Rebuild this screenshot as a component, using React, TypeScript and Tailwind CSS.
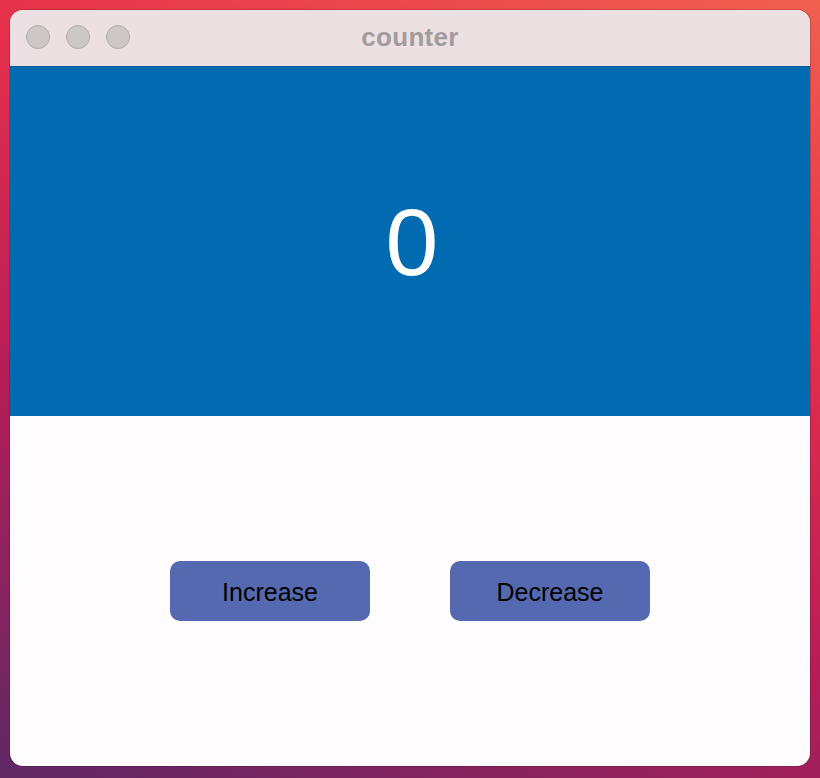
import React, { useState } from "react";

export default function App() {
  const [count, setCount] = useState(0);
  return (
    <div
      className="w-[820px] h-[778px] p-[10px] pb-[12px] overflow-hidden"
      style={{
        background:
          "linear-gradient(200deg, #f0604f 0%, #e6304c 30%, #b81d57 62%, #5e2964 100%)",
      }}
    >
      <div className="w-[800px] h-[756px] rounded-[13px] overflow-hidden flex flex-col bg-[#fefcfd] shadow-[0_0_0_1px_rgba(0,0,0,0.15)]">
        <div className="h-[56px] shrink-0 bg-[#ece0e3] relative flex items-center justify-center">
          <div className="absolute left-[16px] top-[15px] flex gap-[16px]">
            <div className="w-[24px] h-[24px] rounded-full bg-[#cdc7c8] border border-[#b3abad]" />
            <div className="w-[24px] h-[24px] rounded-full bg-[#cdc7c8] border border-[#b3abad]" />
            <div className="w-[24px] h-[24px] rounded-full bg-[#cdc7c8] border border-[#b3abad]" />
          </div>
          <span className="text-[26px] font-bold text-[#a39b9e] font-['Liberation_Sans',sans-serif] leading-none -mt-[2px] tracking-[0.3px]">
            counter
          </span>
        </div>
        <div className="h-[350px] shrink-0 bg-[#006bb0] border-t border-[#0a5a94] flex items-center justify-center">
          <span className="text-[95px] text-white font-['Liberation_Sans',sans-serif] leading-none pl-[4px] pt-[2px]">
            {count}
          </span>
        </div>
        <div className="flex-1 flex items-center justify-center gap-[80px]">
          <button
            onClick={() => setCount(count + 1)}
            className="w-[200px] h-[60px] rounded-[10px] bg-[#5569b0] text-black text-[25px] font-['Liberation_Sans',sans-serif] pt-[3px]"
          >
            Increase
          </button>
          <button
            onClick={() => setCount(count - 1)}
            className="w-[200px] h-[60px] rounded-[10px] bg-[#5569b0] text-black text-[25px] font-['Liberation_Sans',sans-serif] pt-[3px]"
          >
            Decrease
          </button>
        </div>
      </div>
    </div>
  );
}
